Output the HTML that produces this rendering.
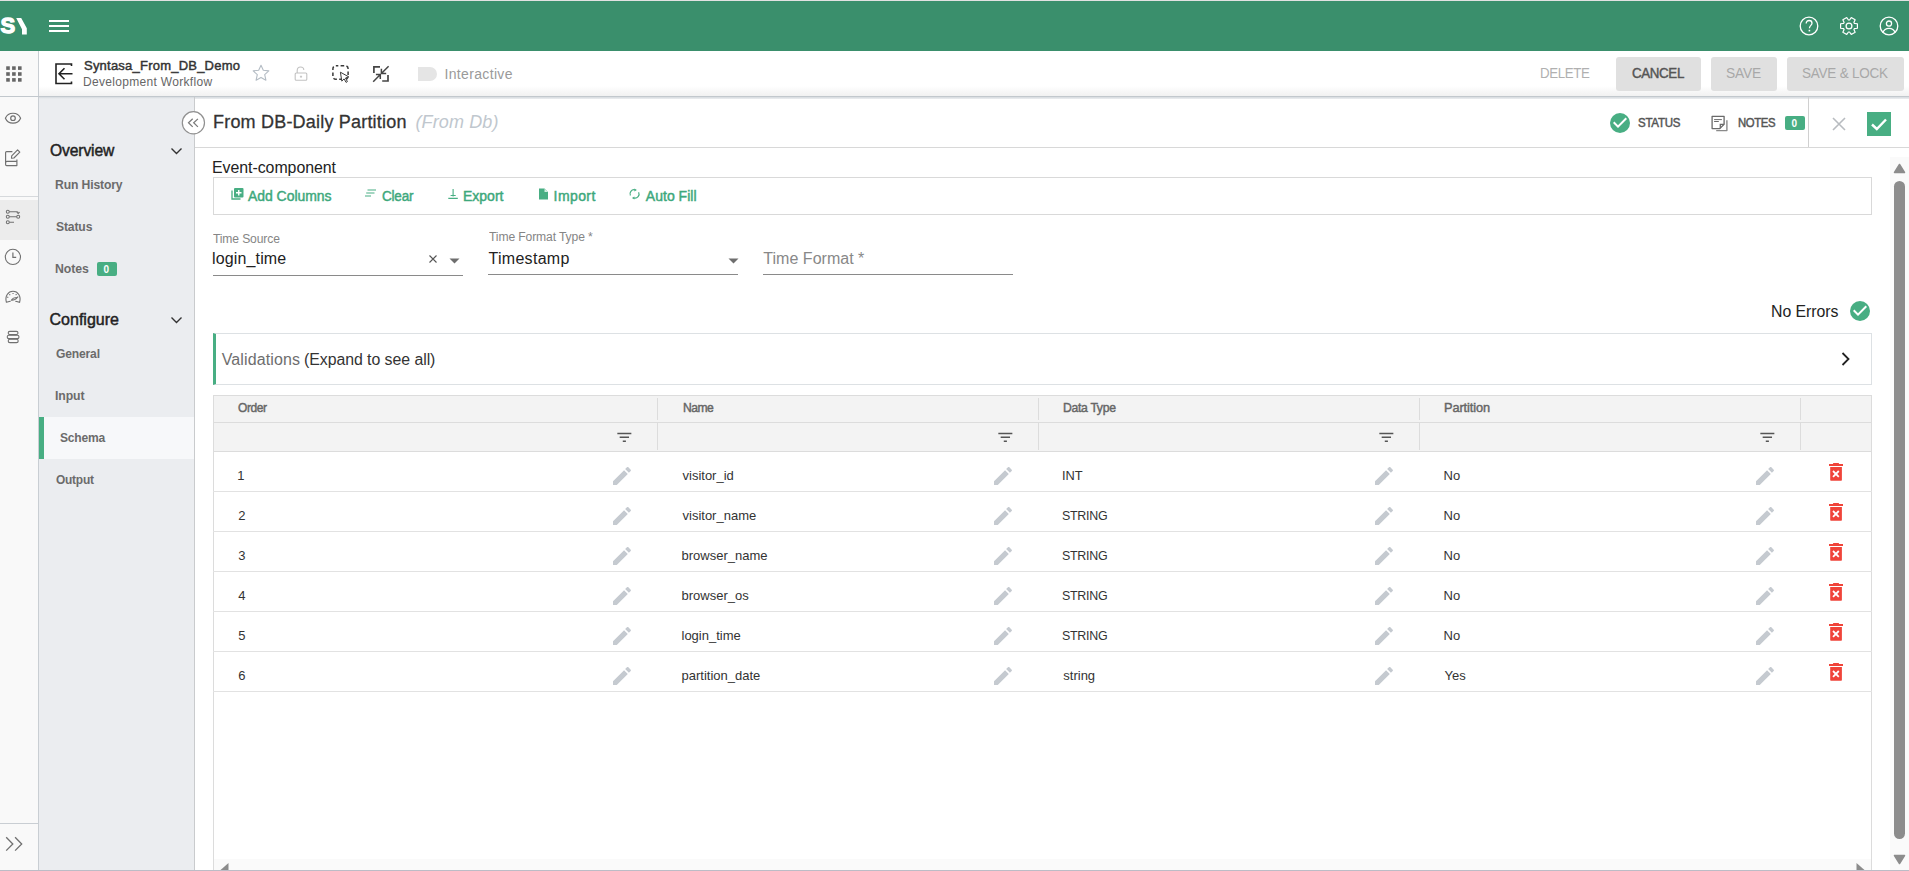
<!DOCTYPE html>
<html><head><meta charset="utf-8">
<style>
*{margin:0;padding:0;box-sizing:border-box}
html,body{width:1909px;height:871px;overflow:hidden;background:#fff;font-family:"Liberation Sans",sans-serif;color:#333}
.a{position:absolute}
.t{position:absolute;white-space:nowrap;line-height:1}
svg{position:absolute;overflow:visible}
</style></head>
<body>
<div class="a" style="left:0px;top:0px;width:1909px;height:1px;background:#e2e2e2;"></div>
<div class="a" style="left:0px;top:1px;width:1909px;height:50px;background:#3a8f6c;"></div>
<div class="t" style="left:0.40px;top:15.30px;font-size:22px;font-weight:700;color:#fff;-webkit-text-stroke:1.3px #fff;">S</div>
<svg style="left:0px;top:0px" width="40" height="50" viewBox="0 0 40 50"><path d="M16.2 17.9 L21.2 17.9 L26.8 28.2 L26.8 34.6 L22 34.6 L22 29.2 Z" fill="#fff"/></svg>
<div class="a" style="left:49px;top:20px;width:20px;height:2px;background:#fff;"></div>
<div class="a" style="left:49px;top:25px;width:20px;height:2px;background:#fff;"></div>
<div class="a" style="left:49px;top:30px;width:20px;height:2px;background:#fff;"></div>
<svg style="left:1799px;top:16px" width="20" height="20" viewBox="0 0 20 20"><circle cx="10" cy="10" r="8.8" fill="none" stroke="#fff" stroke-width="1.3"/><path d="M7.2 7.6 C7.2 5.6 8.6 4.5 10.1 4.5 C11.8 4.5 13 5.6 13 7.2 C13 9.3 10.4 9.5 10.4 12.3" fill="none" stroke="#fff" stroke-width="1.3"/><rect x="9.6" y="13.8" width="1.6" height="1.6" fill="#fff"/></svg>
<svg style="left:1839px;top:15.8px" width="20" height="20" viewBox="0 0 20 20"><path d="M15.44 7.46 L18.40 7.75 L18.40 12.25 L15.44 12.54 L14.91 13.44 L16.15 16.15 L12.25 18.40 L10.52 15.98 L9.48 15.98 L7.75 18.40 L3.85 16.15 L5.09 13.44 L4.56 12.54 L1.60 12.25 L1.60 7.75 L4.56 7.46 L5.09 6.56 L3.85 3.85 L7.75 1.60 L9.48 4.02 L10.52 4.02 L12.25 1.60 L16.15 3.85 L14.91 6.56 Z" fill="none" stroke="#fff" stroke-width="1.2" stroke-linejoin="round"/><circle cx="10" cy="10" r="2.9" fill="none" stroke="#fff" stroke-width="1.3"/></svg>
<svg style="left:1879px;top:16px" width="20" height="20" viewBox="0 0 20 20"><defs><clipPath id="uc"><circle cx="10" cy="10" r="8.6"/></clipPath></defs><circle cx="10" cy="10" r="8.8" fill="none" stroke="#fff" stroke-width="1.3"/><circle cx="10" cy="7.6" r="2.6" fill="none" stroke="#fff" stroke-width="1.3"/><path d="M3.8 16.6 C5 13.2 7.3 12.3 10 12.3 C12.7 12.3 15 13.2 16.2 16.6" fill="none" stroke="#fff" stroke-width="1.3"/></svg>
<div class="a" style="left:0px;top:51px;width:38px;height:820px;background:#f9f9f9;"></div>
<div class="a" style="left:38px;top:51px;width:1px;height:820px;background:#c9ced3;"></div>
<div class="a" style="left:39px;top:51px;width:1870px;height:45px;background:linear-gradient(#fff 0,#fff 35px,#f1f1f1 45px);"></div>
<div class="a" style="left:0px;top:96px;width:1909px;height:1px;background:#c2c8cd;"></div>
<div class="a" style="left:39px;top:97px;width:1870px;height:2px;background:linear-gradient(#d5dadf,#eceef0);"></div>
<svg style="left:0px;top:0px" width="38" height="96" viewBox="0 0 38 96"><rect x="6.20" y="66.30" width="3.6" height="3.6" fill="#666"/><rect x="6.20" y="72.20" width="3.6" height="3.6" fill="#666"/><rect x="6.20" y="78.10" width="3.6" height="3.6" fill="#666"/><rect x="12.10" y="66.30" width="3.6" height="3.6" fill="#666"/><rect x="12.10" y="72.20" width="3.6" height="3.6" fill="#666"/><rect x="12.10" y="78.10" width="3.6" height="3.6" fill="#666"/><rect x="18.00" y="66.30" width="3.6" height="3.6" fill="#666"/><rect x="18.00" y="72.20" width="3.6" height="3.6" fill="#666"/><rect x="18.00" y="78.10" width="3.6" height="3.6" fill="#666"/></svg>
<svg style="left:55px;top:63px" width="18" height="22" viewBox="0 0 18 22"><path d="M16.5 3 L16.5 1 L1 1 L1 20.5 L16.5 20.5 L16.5 18.5" fill="none" stroke="#222" stroke-width="1.6"/><path d="M17.5 10.7 L4 10.7 M9.5 5.2 L4 10.7 L9.5 16.2" fill="none" stroke="#222" stroke-width="1.6"/></svg>
<div class="t" style="left:84.00px;top:58.55px;font-size:13px;font-weight:400;color:#333;letter-spacing:0.221px;-webkit-text-stroke:0.45px;">Syntasa_From_DB_Demo</div>
<div class="t" style="left:83.00px;top:75.70px;font-size:12px;font-weight:400;color:#666;letter-spacing:0.316px;">Development Workflow</div>
<svg style="left:252px;top:64px" width="18" height="18" viewBox="0 0 18 18"><path d="M9 1.2 L11.3 6.3 L16.8 6.9 L12.7 10.6 L13.9 16.2 L9 13.4 L4.1 16.2 L5.3 10.6 L1.2 6.9 L6.7 6.3 Z" fill="none" stroke="#b4bcc4" stroke-width="1.1" stroke-linejoin="round"/></svg>
<svg style="left:294px;top:66px" width="14" height="15" viewBox="0 0 14 15"><path d="M3.2 7 L3.2 4.6 C3.2 2.4 4.6 1 6.5 1 C8.4 1 9.8 2.4 9.8 4" fill="none" stroke="#c2c2c2" stroke-width="1.1"/><rect x="1.2" y="7" width="11.6" height="7.3" rx="1" fill="none" stroke="#c2c2c2" stroke-width="1.1"/><path d="M7 9.6 L7 11.8 M5.9 10.7 L8.1 10.7" stroke="#c2c2c2" stroke-width="1"/></svg>
<svg style="left:331px;top:64px" width="20" height="20" viewBox="0 0 20 20"><rect x="1.9" y="1.7" width="15.2" height="13.6" rx="3" fill="none" stroke="#3a3a3a" stroke-width="1.5" stroke-dasharray="3.6 2.3" stroke-dashoffset="1.2"/><path d="M9.4 8.2 L17.8 12.9 L14.5 14 L16.4 17.6 L15.1 18.4 L13.1 14.9 L10.8 17.1 Z" fill="#fff" stroke="#3a3a3a" stroke-width="1"/></svg>
<svg style="left:372px;top:65px" width="18" height="18" viewBox="0 0 18 18"><path d="M1.9 7.9 L1.9 1.8 L8 1.8 M10.2 16 L16 16 L16 10.1" fill="none" stroke="#454545" stroke-width="1.7"/><path d="M16.6 1.3 L9.6 8.2 M9.4 3.7 L9.4 8.4 L14.2 8.4 M1.2 16.7 L8.1 9.7 M3.9 9.5 L8.3 9.5 L8.3 14.1" fill="none" stroke="#454545" stroke-width="1.5"/></svg>
<div class="a" style="left:418px;top:67px;width:19px;height:14px;background:#e5e5e5;border-radius:0 7px 7px 0"></div>
<div class="t" style="left:444.50px;top:66.60px;font-size:14px;font-weight:400;color:#9a9a9a;letter-spacing:0.340px;">Interactive</div>
<div class="t" style="left:1540.05px;top:66.10px;font-size:14px;font-weight:400;color:#b0b0b0;letter-spacing:-0.370px;transform:scaleX(0.9502);transform-origin:0 0;">DELETE</div>
<div class="a" style="left:1616px;top:57px;width:85px;height:34px;background:#e0e0e0;border-radius:3px"></div>
<div class="t" style="left:1632.00px;top:66.10px;font-size:14px;font-weight:400;color:#555;letter-spacing:-0.378px;transform:scaleX(0.9526);transform-origin:0 0;-webkit-text-stroke:0.45px;">CANCEL</div>
<div class="a" style="left:1711px;top:57px;width:66px;height:34px;background:#e0e0e0;border-radius:3px"></div>
<div class="t" style="left:1726.02px;top:66.10px;font-size:14px;font-weight:400;color:#a8a8a8;letter-spacing:-0.136px;transform:scaleX(0.9829);transform-origin:0 0;">SAVE</div>
<div class="a" style="left:1787px;top:57px;width:117px;height:34px;background:#e0e0e0;border-radius:3px"></div>
<div class="t" style="left:1802.04px;top:66.10px;font-size:14px;font-weight:400;color:#a8a8a8;letter-spacing:-0.224px;transform:scaleX(0.9640);transform-origin:0 0;">SAVE &amp; LOCK</div>
<div class="a" style="left:39px;top:99px;width:155px;height:772px;background:#ebedf0;"></div>
<div class="a" style="left:194px;top:97px;width:1px;height:774px;background:#c9cbcd;"></div>
<div class="a" style="left:0px;top:196px;width:38px;height:1px;background:#d6d9dc;"></div>
<div class="a" style="left:0px;top:200px;width:38px;height:40px;background:#ececec;"></div>
<div class="a" style="left:0px;top:823px;width:38px;height:1px;background:#c9ced3;"></div>
<svg style="left:0px;top:108px" width="38" height="24" viewBox="0 0 38 24"><path d="M5.4 10.2 C8.2 3.6 17.8 3.6 20.6 10.2 C17.8 16.8 8.2 16.8 5.4 10.2 Z" fill="none" stroke="#707070" stroke-width="1.15" stroke-linejoin="round"/><circle cx="13" cy="10.2" r="2.3" fill="none" stroke="#707070" stroke-width="1.2"/></svg>
<svg style="left:0px;top:140px" width="38" height="30" viewBox="0 0 38 30"><g fill="none" stroke="#707070" stroke-width="1.15" stroke-linejoin="round"><path d="M12.4 11.6 L6.6 11.6 C6 11.6 5.6 12 5.6 12.6 L5.6 24.6 C5.6 25.2 6 25.6 6.6 25.6 L16.9 25.6 L16.9 19.4"/><path d="M5.7 22.4 C5.7 21.7 6.1 21.3 6.8 21.3 L16.9 21.3"/><path d="M11.5 18.2 L11.7 15.8 L17.6 9.9 L19.8 12.1 L13.9 18 Z"/></g></svg>
<svg style="left:0px;top:200px" width="38" height="40" viewBox="0 0 38 40"><g fill="none" stroke="#707070" stroke-width="1.05"><circle cx="7.8" cy="11.7" r="1.5"/><circle cx="7.8" cy="16.8" r="1.5"/><circle cx="18.2" cy="16.8" r="1.5"/><circle cx="7.8" cy="22.3" r="1.5"/><path d="M9.3 11.7 L17 11.7 C17.8 11.7 18.2 12.2 18.2 13"/><path d="M9.3 16.8 L16.7 16.8 M9.3 22.3 L14 22.3"/><path d="M16.8 12.2 L18.2 13.6 L19.6 12.2"/></g></svg>
<svg style="left:0px;top:240px" width="38" height="40" viewBox="0 0 38 40"><circle cx="12.9" cy="16.9" r="7.6" fill="none" stroke="#707070" stroke-width="1.1"/><path d="M12.9 12.6 L12.9 17.3 L16.2 17.3" fill="none" stroke="#707070" stroke-width="1.2"/></svg>
<svg style="left:0px;top:280px" width="38" height="40" viewBox="0 0 38 40"><g fill="none" stroke="#707070" stroke-width="1.1" stroke-linecap="round"><path d="M6.4 22.3 C4.6 16 8.2 11.3 13 11.3 C17.8 11.3 21.4 16 19.6 22.3 L15.7 21.3 M6.4 22.3 L10.2 21.3"/><path d="M9.6 14.6 L9.9 14.8 M12.9 13.5 L13.2 13.5 M16 14.7 L16.3 14.5 M7.7 17.1 L7.9 17.4 M17.7 17 L17.9 16.8"/><path d="M11.5 20.1 C12.4 18.4 15.3 17.5 17.2 17.5 C16.4 19.1 13.6 20.3 11.5 20.1 Z"/></g></svg>
<svg style="left:0px;top:320px" width="38" height="40" viewBox="0 0 38 40"><g fill="none" stroke="#707070" stroke-width="1.1"><rect x="8.2" y="11.4" width="9.8" height="3.2" rx="1.6"/><rect x="7.2" y="15.2" width="11.8" height="3.4" rx="1.7"/><rect x="8.2" y="19.2" width="10" height="3.4" rx="1.7"/></g></svg>
<svg style="left:3px;top:834px" width="20" height="20" viewBox="0 0 20 20"><path d="M3.2 3.3 L9.8 10 L3.2 16.6 M12.1 3.3 L18.7 10 L12.1 16.6" fill="none" stroke="#707070" stroke-width="1.3"/></svg>
<svg style="left:176px;top:105px" width="36" height="36" viewBox="0 0 36 36"><circle cx="17.4" cy="17.8" r="11.1" fill="#fff" stroke="#909090" stroke-width="1.2"/><path d="M16.7 13.7 L12.5 17.8 L16.7 21.9 M21.9 13.9 L17.7 17.8 L21.9 21.9" fill="none" stroke="#7a7a7a" stroke-width="1.25"/></svg>
<div class="t" style="left:49.50px;top:142.90px;font-size:16px;font-weight:400;color:#222;letter-spacing:-0.140px;transform:scaleX(0.9785);transform-origin:0 0;-webkit-text-stroke:0.45px;">Overview</div>
<svg style="left:170px;top:145px" width="13" height="13" viewBox="0 0 13 13"><path d="M1.5 3.5 L6.5 8.5 L11.5 3.5" fill="none" stroke="#333" stroke-width="1.4"/></svg>
<div class="t" style="left:54.53px;top:179.18px;font-size:12.5px;font-weight:700;color:#6b6b6b;letter-spacing:-0.132px;transform:scaleX(0.9726);transform-origin:0 0;">Run History</div>
<div class="t" style="left:55.50px;top:220.88px;font-size:12.5px;font-weight:700;color:#6b6b6b;letter-spacing:-0.148px;transform:scaleX(0.9716);transform-origin:0 0;">Status</div>
<div class="t" style="left:54.52px;top:263.18px;font-size:12.5px;font-weight:700;color:#6b6b6b;letter-spacing:-0.102px;transform:scaleX(0.9824);transform-origin:0 0;">Notes</div>
<div class="a" style="left:97px;top:262px;width:20px;height:14px;background:#48ae83;border-radius:2px"></div>
<div class="t" style="left:103.50px;top:264.50px;font-size:10px;font-weight:700;color:#fff;">0</div>
<div class="t" style="left:49.50px;top:312.30px;font-size:16px;font-weight:400;color:#222;letter-spacing:0.012px;-webkit-text-stroke:0.45px;">Configure</div>
<svg style="left:170px;top:314px" width="13" height="13" viewBox="0 0 13 13"><path d="M1.5 3.5 L6.5 8.5 L11.5 3.5" fill="none" stroke="#333" stroke-width="1.4"/></svg>
<div class="t" style="left:55.50px;top:348.07px;font-size:12.5px;font-weight:700;color:#6b6b6b;letter-spacing:-0.172px;transform:scaleX(0.9674);transform-origin:0 0;">General</div>
<div class="t" style="left:54.52px;top:389.57px;font-size:12.5px;font-weight:700;color:#6b6b6b;letter-spacing:-0.102px;transform:scaleX(0.9800);transform-origin:0 0;">Input</div>
<div class="a" style="left:39px;top:417px;width:155px;height:42px;background:#f7f8fa;"></div>
<div class="a" style="left:39px;top:417px;width:5px;height:42px;background:#48ae83;"></div>
<div class="t" style="left:60.20px;top:432.48px;font-size:12.5px;font-weight:700;color:#6b6b6b;letter-spacing:-0.232px;transform:scaleX(0.9650);transform-origin:0 0;">Schema</div>
<div class="t" style="left:55.50px;top:474.18px;font-size:12.5px;font-weight:700;color:#6b6b6b;letter-spacing:-0.251px;transform:scaleX(0.9561);transform-origin:0 0;">Output</div>
<div class="a" style="left:195px;top:147px;width:1714px;height:1px;background:#d8d8d8;"></div>
<div class="t" style="left:213.00px;top:112.70px;font-size:18px;font-weight:400;color:#333;letter-spacing:0.200px;-webkit-text-stroke:0.3px;">From DB-Daily Partition</div>
<div class="t" style="left:415.40px;top:112.70px;font-size:18px;font-weight:400;color:#c0c7ce;letter-spacing:0.137px;font-style:italic">(From Db)</div>
<svg style="left:1610px;top:112.8px" width="20" height="20" viewBox="2 2 20 20"><circle cx="12" cy="12" r="10" fill="#48ae83"/><path d="M10 17l-5-5 1.41-1.41L10 14.17l7.59-7.59L19 8l-9 9z" fill="#fff"/></svg>
<div class="t" style="left:1638.40px;top:116.70px;font-size:12px;font-weight:400;color:#555;letter-spacing:-0.258px;transform:scaleX(0.9596);transform-origin:0 0;-webkit-text-stroke:0.45px;">STATUS</div>
<svg style="left:1700px;top:108px" width="30" height="30" viewBox="0 0 30 30"><path d="M12.1 8.3 L24.1 8.3 L24.1 16.3 L19.8 20.6 L12.1 20.6 Z" fill="none" stroke="#6a6a6a" stroke-width="1.3" stroke-linejoin="round"/><path d="M24.1 16.3 L20.3 16.3 L20.3 20.3" fill="none" stroke="#6a6a6a" stroke-width="1.3"/><path d="M14.1 11.6 L21.9 11.6 M14.1 13.5 L18.8 13.5" stroke="#6a6a6a" stroke-width="1"/><path d="M26.9 12.3 L26.9 22.6 L16.2 22.6" fill="none" stroke="#8a8a8a" stroke-width="1.4" stroke-linejoin="round"/></svg>
<div class="t" style="left:1737.60px;top:116.70px;font-size:12px;font-weight:400;color:#555;letter-spacing:-0.402px;transform:scaleX(0.9444);transform-origin:0 0;-webkit-text-stroke:0.45px;">NOTES</div>
<div class="a" style="left:1785px;top:116px;width:20px;height:14px;background:#48ae83;border-radius:2px"></div>
<div class="t" style="left:1791.50px;top:118.50px;font-size:10px;font-weight:700;color:#fff;">0</div>
<div class="a" style="left:1808px;top:97px;width:1px;height:50px;background:#d0d0d0;"></div>
<svg style="left:1832px;top:117px" width="14" height="14" viewBox="0 0 14 14"><path d="M1 1 L13 13 M13 1 L1 13" stroke="#b8bcc0" stroke-width="1.6"/></svg>
<div class="a" style="left:1867px;top:112px;width:24px;height:24px;background:#48ae83;"></div>
<svg style="left:1867px;top:112px" width="24" height="24" viewBox="0 0 24 24"><path d="M5 12.5 L9.8 17 L19 7.5" fill="none" stroke="#fff" stroke-width="2.4"/></svg>
<div class="a" style="left:1890px;top:157px;width:19px;height:714px;background:#fafafa;"></div>
<svg style="left:1893px;top:163px" width="13" height="11" viewBox="0 0 13 11"><path d="M6.5 1.5 L11.5 9.5 L1.5 9.5 Z" fill="#8c8c8c" stroke="#8c8c8c" stroke-width="1.5" stroke-linejoin="round"/></svg>
<div class="a" style="left:1894px;top:181px;width:11px;height:658px;background:#8c8c8c;border-radius:5.5px"></div>
<svg style="left:1893px;top:854px" width="13" height="11" viewBox="0 0 13 11"><path d="M1.5 1.5 L11.5 1.5 L6.5 9.5 Z" fill="#8c8c8c" stroke="#8c8c8c" stroke-width="1.5" stroke-linejoin="round"/></svg>
<div class="t" style="left:212.01px;top:160.20px;font-size:16px;font-weight:400;color:#222;letter-spacing:-0.040px;transform:scaleX(0.9933);transform-origin:0 0;">Event-component</div>
<div class="a" style="left:213px;top:177px;width:1659px;height:38px;background:#fff;border:1px solid #d9d9d9"></div>
<svg style="left:230.7px;top:187px" width="13" height="13" viewBox="0 0 13 13"><path d="M1 3.5 L1 12 L9.5 12" fill="none" stroke="#48ae83" stroke-width="1.3"/><rect x="3" y="1" width="9.5" height="9.5" rx="1" fill="#48ae83"/><path d="M7.75 3 L7.75 8.5 M5 5.75 L10.5 5.75" stroke="#fff" stroke-width="1.4"/></svg>
<div class="t" style="left:247.80px;top:188.80px;font-size:14px;font-weight:400;color:#3da87c;letter-spacing:-0.020px;transform:scaleX(0.9964);transform-origin:0 0;-webkit-text-stroke:0.45px;">Add Columns</div>
<svg style="left:364px;top:189px" width="13" height="9" viewBox="0 0 13 9"><path d="M3.5 1 L12 1 M2.2 4 L10.5 4 M1 7 L7 7" stroke="#48ae83" stroke-width="1.1"/></svg>
<div class="t" style="left:381.60px;top:188.80px;font-size:14px;font-weight:400;color:#3da87c;letter-spacing:-0.207px;transform:scaleX(0.9647);transform-origin:0 0;-webkit-text-stroke:0.45px;">Clear</div>
<svg style="left:447px;top:188px" width="12" height="12" viewBox="0 0 12 12"><path d="M6.1 1 L6.1 8.6 M3.6 7.5 L8.7 7.5 M1.3 10.4 L10.8 10.4" fill="none" stroke="#48ae83" stroke-width="1.1"/></svg>
<div class="t" style="left:463.00px;top:188.80px;font-size:14px;font-weight:400;color:#3da87c;letter-spacing:0.000px;-webkit-text-stroke:0.45px;">Export</div>
<svg style="left:538px;top:188px" width="11" height="12" viewBox="0 0 11 12"><path d="M1 0.5 L6.5 0.5 L10 4 L10 11.5 L1 11.5 Z" fill="#48ae83"/><path d="M6.5 0.5 L6.5 4 L10 4" fill="#d0eee0"/></svg>
<div class="t" style="left:553.60px;top:188.80px;font-size:14px;font-weight:400;color:#3da87c;letter-spacing:0.400px;-webkit-text-stroke:0.45px;">Import</div>
<svg style="left:629px;top:188px" width="12" height="12" viewBox="0 0 12 12"><path d="M1.4 7.6 A4.1 4.1 0 0 1 5.9 1.8 M9.6 4.2 A4.1 4.1 0 0 1 4.9 10" fill="none" stroke="#48ae83" stroke-width="1.2"/><path d="M5.4 0.4 L7.9 2 L5.4 3.5 Z M5.4 8.5 L2.9 9.9 L5.4 11.4 Z" fill="#48ae83"/></svg>
<div class="t" style="left:645.80px;top:188.80px;font-size:14px;font-weight:400;color:#3da87c;letter-spacing:0.025px;-webkit-text-stroke:0.45px;">Auto Fill</div>
<div class="t" style="left:213.00px;top:233.18px;font-size:12.5px;font-weight:400;color:#858585;letter-spacing:-0.144px;transform:scaleX(0.9700);transform-origin:0 0;">Time Source</div>
<div class="t" style="left:212.00px;top:250.90px;font-size:16px;font-weight:400;color:#222;letter-spacing:0.144px;">login_time</div>
<svg style="left:426.8px;top:253px" width="12" height="12" viewBox="0 0 12 12"><path d="M2.5 2.5 L9.5 9.5 M9.5 2.5 L2.5 9.5" stroke="#555" stroke-width="1.1"/></svg>
<svg style="left:447.5px;top:256.9px" width="13" height="8" viewBox="0 0 13 8"><path d="M1.5 1.5 L11.5 1.5 L6.5 6.5 Z" fill="#6e6e6e"/></svg>
<div class="a" style="left:213px;top:275px;width:250px;height:1px;background:#8a8a8a;"></div>
<div class="t" style="left:488.50px;top:230.88px;font-size:12.5px;font-weight:400;color:#858585;letter-spacing:-0.128px;transform:scaleX(0.9708);transform-origin:0 0;">Time Format Type *</div>
<div class="t" style="left:488.50px;top:251.40px;font-size:16px;font-weight:400;color:#222;letter-spacing:0.287px;">Timestamp</div>
<svg style="left:726.6px;top:256.9px" width="13" height="8" viewBox="0 0 13 8"><path d="M1.5 1.5 L11.5 1.5 L6.5 6.5 Z" fill="#6e6e6e"/></svg>
<div class="a" style="left:488px;top:274px;width:250px;height:1px;background:#8a8a8a;"></div>
<div class="t" style="left:763.30px;top:251.30px;font-size:16px;font-weight:400;color:#888;letter-spacing:0.025px;">Time Format *</div>
<div class="a" style="left:763px;top:274px;width:250px;height:1px;background:#8a8a8a;"></div>
<div class="t" style="left:1770.51px;top:304.40px;font-size:16px;font-weight:400;color:#222;letter-spacing:-0.056px;transform:scaleX(0.9901);transform-origin:0 0;">No Errors</div>
<svg style="left:1850px;top:301px" width="20" height="20" viewBox="2 2 20 20"><circle cx="12" cy="12" r="10" fill="#48ae83"/><path d="M10 17l-5-5 1.41-1.41L10 14.17l7.59-7.59L19 8l-9 9z" fill="#fff"/></svg>
<div class="a" style="left:213px;top:333px;width:1659px;height:52px;background:#fff;border:1px solid #dde1e4;border-left:3px solid #48ae83"></div>
<div class="t" style="left:221.70px;top:352.00px;font-size:16px;font-weight:400;color:#6e6e6e;letter-spacing:0.130px;">Validations</div>
<div class="t" style="left:303.81px;top:352.00px;font-size:16px;font-weight:400;color:#333;letter-spacing:-0.045px;transform:scaleX(0.9909);transform-origin:0 0;">(Expand to see all)</div>
<svg style="left:1840px;top:351px" width="12" height="16" viewBox="0 0 12 16"><path d="M2.5 2 L8.5 8 L2.5 14" fill="none" stroke="#222" stroke-width="1.8"/></svg>
<div class="a" style="left:213px;top:395px;width:1659px;height:57px;background:#f3f3f3;"></div>
<div class="a" style="left:213px;top:395px;width:1659px;height:1px;background:#dcdcdc;"></div>
<div class="a" style="left:213px;top:422px;width:1659px;height:1px;background:#dcdcdc;"></div>
<div class="a" style="left:213px;top:451px;width:1659px;height:1px;background:#dcdcdc;"></div>
<div class="a" style="left:213px;top:395px;width:1px;height:476px;background:#dcdcdc;"></div>
<div class="a" style="left:1871px;top:395px;width:1px;height:476px;background:#dcdcdc;"></div>
<div class="a" style="left:657px;top:398px;width:1px;height:22px;background:#dcdcdc;"></div>
<div class="a" style="left:657px;top:423px;width:1px;height:27px;background:#dcdcdc;"></div>
<div class="a" style="left:1038px;top:398px;width:1px;height:22px;background:#dcdcdc;"></div>
<div class="a" style="left:1038px;top:423px;width:1px;height:27px;background:#dcdcdc;"></div>
<div class="a" style="left:1419px;top:398px;width:1px;height:22px;background:#dcdcdc;"></div>
<div class="a" style="left:1419px;top:423px;width:1px;height:27px;background:#dcdcdc;"></div>
<div class="a" style="left:1800px;top:398px;width:1px;height:22px;background:#dcdcdc;"></div>
<div class="a" style="left:1800px;top:423px;width:1px;height:27px;background:#dcdcdc;"></div>
<div class="t" style="left:238.20px;top:401.25px;font-size:13px;font-weight:400;color:#666;letter-spacing:-0.465px;transform:scaleX(0.9241);transform-origin:0 0;-webkit-text-stroke:0.45px;">Order</div>
<div class="t" style="left:682.50px;top:401.25px;font-size:13px;font-weight:400;color:#666;letter-spacing:-0.573px;transform:scaleX(0.9314);transform-origin:0 0;-webkit-text-stroke:0.45px;">Name</div>
<div class="t" style="left:1063.30px;top:401.25px;font-size:13px;font-weight:400;color:#666;letter-spacing:-0.325px;transform:scaleX(0.9380);transform-origin:0 0;-webkit-text-stroke:0.45px;">Data Type</div>
<div class="t" style="left:1444.00px;top:401.25px;font-size:13px;font-weight:400;color:#666;letter-spacing:-0.082px;transform:scaleX(0.9800);transform-origin:0 0;-webkit-text-stroke:0.45px;">Partition</div>
<svg style="left:614.7px;top:427.9px" width="18.7" height="18.7" viewBox="0 0 24 24"><path d="M10 18h4v-2h-4v2zM3 6v2h18V6H3zm3 7h12v-2H6v2z" fill="#555"/></svg>
<svg style="left:995.95px;top:427.9px" width="18.7" height="18.7" viewBox="0 0 24 24"><path d="M10 18h4v-2h-4v2zM3 6v2h18V6H3zm3 7h12v-2H6v2z" fill="#555"/></svg>
<svg style="left:1377.05px;top:427.9px" width="18.7" height="18.7" viewBox="0 0 24 24"><path d="M10 18h4v-2h-4v2zM3 6v2h18V6H3zm3 7h12v-2H6v2z" fill="#555"/></svg>
<svg style="left:1758.05px;top:427.9px" width="18.7" height="18.7" viewBox="0 0 24 24"><path d="M10 18h4v-2h-4v2zM3 6v2h18V6H3zm3 7h12v-2H6v2z" fill="#555"/></svg>
<div class="a" style="left:213px;top:491px;width:1659px;height:1px;background:#e2e2e2;"></div>
<div class="t" style="left:237.20px;top:469.25px;font-size:13px;font-weight:400;color:#333;">1</div>
<div class="t" style="left:682.50px;top:469.25px;font-size:13px;font-weight:400;color:#333;">visitor_id</div>
<div class="t" style="left:1062.31px;top:469.25px;font-size:13px;font-weight:400;color:#333;letter-spacing:-0.081px;transform:scaleX(0.9880);transform-origin:0 0;">INT</div>
<div class="t" style="left:1443.60px;top:469.25px;font-size:13px;font-weight:400;color:#333;">No</div>
<svg style="left:610px;top:464px" width="24" height="24" viewBox="0 0 24 24"><path d="M3 17.25V21h3.75L17.81 9.94l-3.75-3.75L3 17.25zM20.71 7.04c.39-.39.39-1.02 0-1.41l-2.34-2.34c-.39-.39-1.02-.39-1.41 0l-1.83 1.83 3.75 3.75 1.83-1.83z" fill="#c5cad0"/></svg>
<svg style="left:991px;top:464px" width="24" height="24" viewBox="0 0 24 24"><path d="M3 17.25V21h3.75L17.81 9.94l-3.75-3.75L3 17.25zM20.71 7.04c.39-.39.39-1.02 0-1.41l-2.34-2.34c-.39-.39-1.02-.39-1.41 0l-1.83 1.83 3.75 3.75 1.83-1.83z" fill="#c5cad0"/></svg>
<svg style="left:1372px;top:464px" width="24" height="24" viewBox="0 0 24 24"><path d="M3 17.25V21h3.75L17.81 9.94l-3.75-3.75L3 17.25zM20.71 7.04c.39-.39.39-1.02 0-1.41l-2.34-2.34c-.39-.39-1.02-.39-1.41 0l-1.83 1.83 3.75 3.75 1.83-1.83z" fill="#c5cad0"/></svg>
<svg style="left:1753px;top:464px" width="24" height="24" viewBox="0 0 24 24"><path d="M3 17.25V21h3.75L17.81 9.94l-3.75-3.75L3 17.25zM20.71 7.04c.39-.39.39-1.02 0-1.41l-2.34-2.34c-.39-.39-1.02-.39-1.41 0l-1.83 1.83 3.75 3.75 1.83-1.83z" fill="#c5cad0"/></svg>
<svg style="left:1829px;top:463px" width="14" height="18" viewBox="0 0 14 18"><rect x="0" y="1" width="14" height="2" fill="#f0443a"/><rect x="4" y="0" width="6" height="1.5" rx="0.6" fill="#f0443a"/><path d="M1.2 4 L12.9 4 L12.9 16.7 C12.9 17.3 12.5 17.7 11.9 17.7 L2.2 17.7 C1.6 17.7 1.2 17.3 1.2 16.7 Z" fill="#f0443a"/><path d="M4 8 L9.8 13.8 M9.8 8 L4 13.8" stroke="#fff" stroke-width="1.8"/></svg>
<div class="a" style="left:213px;top:531px;width:1659px;height:1px;background:#e2e2e2;"></div>
<div class="t" style="left:238.20px;top:509.25px;font-size:13px;font-weight:400;color:#333;">2</div>
<div class="t" style="left:682.50px;top:509.25px;font-size:13px;font-weight:400;color:#333;">visitor_name</div>
<div class="t" style="left:1062.34px;top:509.25px;font-size:13px;font-weight:400;color:#333;letter-spacing:-0.284px;transform:scaleX(0.9575);transform-origin:0 0;">STRING</div>
<div class="t" style="left:1443.60px;top:509.25px;font-size:13px;font-weight:400;color:#333;">No</div>
<svg style="left:610px;top:504px" width="24" height="24" viewBox="0 0 24 24"><path d="M3 17.25V21h3.75L17.81 9.94l-3.75-3.75L3 17.25zM20.71 7.04c.39-.39.39-1.02 0-1.41l-2.34-2.34c-.39-.39-1.02-.39-1.41 0l-1.83 1.83 3.75 3.75 1.83-1.83z" fill="#c5cad0"/></svg>
<svg style="left:991px;top:504px" width="24" height="24" viewBox="0 0 24 24"><path d="M3 17.25V21h3.75L17.81 9.94l-3.75-3.75L3 17.25zM20.71 7.04c.39-.39.39-1.02 0-1.41l-2.34-2.34c-.39-.39-1.02-.39-1.41 0l-1.83 1.83 3.75 3.75 1.83-1.83z" fill="#c5cad0"/></svg>
<svg style="left:1372px;top:504px" width="24" height="24" viewBox="0 0 24 24"><path d="M3 17.25V21h3.75L17.81 9.94l-3.75-3.75L3 17.25zM20.71 7.04c.39-.39.39-1.02 0-1.41l-2.34-2.34c-.39-.39-1.02-.39-1.41 0l-1.83 1.83 3.75 3.75 1.83-1.83z" fill="#c5cad0"/></svg>
<svg style="left:1753px;top:504px" width="24" height="24" viewBox="0 0 24 24"><path d="M3 17.25V21h3.75L17.81 9.94l-3.75-3.75L3 17.25zM20.71 7.04c.39-.39.39-1.02 0-1.41l-2.34-2.34c-.39-.39-1.02-.39-1.41 0l-1.83 1.83 3.75 3.75 1.83-1.83z" fill="#c5cad0"/></svg>
<svg style="left:1829px;top:503px" width="14" height="18" viewBox="0 0 14 18"><rect x="0" y="1" width="14" height="2" fill="#f0443a"/><rect x="4" y="0" width="6" height="1.5" rx="0.6" fill="#f0443a"/><path d="M1.2 4 L12.9 4 L12.9 16.7 C12.9 17.3 12.5 17.7 11.9 17.7 L2.2 17.7 C1.6 17.7 1.2 17.3 1.2 16.7 Z" fill="#f0443a"/><path d="M4 8 L9.8 13.8 M9.8 8 L4 13.8" stroke="#fff" stroke-width="1.8"/></svg>
<div class="a" style="left:213px;top:571px;width:1659px;height:1px;background:#e2e2e2;"></div>
<div class="t" style="left:238.20px;top:549.25px;font-size:13px;font-weight:400;color:#333;">3</div>
<div class="t" style="left:681.50px;top:549.25px;font-size:13px;font-weight:400;color:#333;">browser_name</div>
<div class="t" style="left:1062.34px;top:549.25px;font-size:13px;font-weight:400;color:#333;letter-spacing:-0.284px;transform:scaleX(0.9575);transform-origin:0 0;">STRING</div>
<div class="t" style="left:1443.60px;top:549.25px;font-size:13px;font-weight:400;color:#333;">No</div>
<svg style="left:610px;top:544px" width="24" height="24" viewBox="0 0 24 24"><path d="M3 17.25V21h3.75L17.81 9.94l-3.75-3.75L3 17.25zM20.71 7.04c.39-.39.39-1.02 0-1.41l-2.34-2.34c-.39-.39-1.02-.39-1.41 0l-1.83 1.83 3.75 3.75 1.83-1.83z" fill="#c5cad0"/></svg>
<svg style="left:991px;top:544px" width="24" height="24" viewBox="0 0 24 24"><path d="M3 17.25V21h3.75L17.81 9.94l-3.75-3.75L3 17.25zM20.71 7.04c.39-.39.39-1.02 0-1.41l-2.34-2.34c-.39-.39-1.02-.39-1.41 0l-1.83 1.83 3.75 3.75 1.83-1.83z" fill="#c5cad0"/></svg>
<svg style="left:1372px;top:544px" width="24" height="24" viewBox="0 0 24 24"><path d="M3 17.25V21h3.75L17.81 9.94l-3.75-3.75L3 17.25zM20.71 7.04c.39-.39.39-1.02 0-1.41l-2.34-2.34c-.39-.39-1.02-.39-1.41 0l-1.83 1.83 3.75 3.75 1.83-1.83z" fill="#c5cad0"/></svg>
<svg style="left:1753px;top:544px" width="24" height="24" viewBox="0 0 24 24"><path d="M3 17.25V21h3.75L17.81 9.94l-3.75-3.75L3 17.25zM20.71 7.04c.39-.39.39-1.02 0-1.41l-2.34-2.34c-.39-.39-1.02-.39-1.41 0l-1.83 1.83 3.75 3.75 1.83-1.83z" fill="#c5cad0"/></svg>
<svg style="left:1829px;top:543px" width="14" height="18" viewBox="0 0 14 18"><rect x="0" y="1" width="14" height="2" fill="#f0443a"/><rect x="4" y="0" width="6" height="1.5" rx="0.6" fill="#f0443a"/><path d="M1.2 4 L12.9 4 L12.9 16.7 C12.9 17.3 12.5 17.7 11.9 17.7 L2.2 17.7 C1.6 17.7 1.2 17.3 1.2 16.7 Z" fill="#f0443a"/><path d="M4 8 L9.8 13.8 M9.8 8 L4 13.8" stroke="#fff" stroke-width="1.8"/></svg>
<div class="a" style="left:213px;top:611px;width:1659px;height:1px;background:#e2e2e2;"></div>
<div class="t" style="left:238.20px;top:589.25px;font-size:13px;font-weight:400;color:#333;">4</div>
<div class="t" style="left:681.50px;top:589.25px;font-size:13px;font-weight:400;color:#333;">browser_os</div>
<div class="t" style="left:1062.34px;top:589.25px;font-size:13px;font-weight:400;color:#333;letter-spacing:-0.284px;transform:scaleX(0.9575);transform-origin:0 0;">STRING</div>
<div class="t" style="left:1443.60px;top:589.25px;font-size:13px;font-weight:400;color:#333;">No</div>
<svg style="left:610px;top:584px" width="24" height="24" viewBox="0 0 24 24"><path d="M3 17.25V21h3.75L17.81 9.94l-3.75-3.75L3 17.25zM20.71 7.04c.39-.39.39-1.02 0-1.41l-2.34-2.34c-.39-.39-1.02-.39-1.41 0l-1.83 1.83 3.75 3.75 1.83-1.83z" fill="#c5cad0"/></svg>
<svg style="left:991px;top:584px" width="24" height="24" viewBox="0 0 24 24"><path d="M3 17.25V21h3.75L17.81 9.94l-3.75-3.75L3 17.25zM20.71 7.04c.39-.39.39-1.02 0-1.41l-2.34-2.34c-.39-.39-1.02-.39-1.41 0l-1.83 1.83 3.75 3.75 1.83-1.83z" fill="#c5cad0"/></svg>
<svg style="left:1372px;top:584px" width="24" height="24" viewBox="0 0 24 24"><path d="M3 17.25V21h3.75L17.81 9.94l-3.75-3.75L3 17.25zM20.71 7.04c.39-.39.39-1.02 0-1.41l-2.34-2.34c-.39-.39-1.02-.39-1.41 0l-1.83 1.83 3.75 3.75 1.83-1.83z" fill="#c5cad0"/></svg>
<svg style="left:1753px;top:584px" width="24" height="24" viewBox="0 0 24 24"><path d="M3 17.25V21h3.75L17.81 9.94l-3.75-3.75L3 17.25zM20.71 7.04c.39-.39.39-1.02 0-1.41l-2.34-2.34c-.39-.39-1.02-.39-1.41 0l-1.83 1.83 3.75 3.75 1.83-1.83z" fill="#c5cad0"/></svg>
<svg style="left:1829px;top:583px" width="14" height="18" viewBox="0 0 14 18"><rect x="0" y="1" width="14" height="2" fill="#f0443a"/><rect x="4" y="0" width="6" height="1.5" rx="0.6" fill="#f0443a"/><path d="M1.2 4 L12.9 4 L12.9 16.7 C12.9 17.3 12.5 17.7 11.9 17.7 L2.2 17.7 C1.6 17.7 1.2 17.3 1.2 16.7 Z" fill="#f0443a"/><path d="M4 8 L9.8 13.8 M9.8 8 L4 13.8" stroke="#fff" stroke-width="1.8"/></svg>
<div class="a" style="left:213px;top:651px;width:1659px;height:1px;background:#e2e2e2;"></div>
<div class="t" style="left:238.20px;top:629.25px;font-size:13px;font-weight:400;color:#333;">5</div>
<div class="t" style="left:681.50px;top:629.25px;font-size:13px;font-weight:400;color:#333;">login_time</div>
<div class="t" style="left:1062.34px;top:629.25px;font-size:13px;font-weight:400;color:#333;letter-spacing:-0.284px;transform:scaleX(0.9575);transform-origin:0 0;">STRING</div>
<div class="t" style="left:1443.60px;top:629.25px;font-size:13px;font-weight:400;color:#333;">No</div>
<svg style="left:610px;top:624px" width="24" height="24" viewBox="0 0 24 24"><path d="M3 17.25V21h3.75L17.81 9.94l-3.75-3.75L3 17.25zM20.71 7.04c.39-.39.39-1.02 0-1.41l-2.34-2.34c-.39-.39-1.02-.39-1.41 0l-1.83 1.83 3.75 3.75 1.83-1.83z" fill="#c5cad0"/></svg>
<svg style="left:991px;top:624px" width="24" height="24" viewBox="0 0 24 24"><path d="M3 17.25V21h3.75L17.81 9.94l-3.75-3.75L3 17.25zM20.71 7.04c.39-.39.39-1.02 0-1.41l-2.34-2.34c-.39-.39-1.02-.39-1.41 0l-1.83 1.83 3.75 3.75 1.83-1.83z" fill="#c5cad0"/></svg>
<svg style="left:1372px;top:624px" width="24" height="24" viewBox="0 0 24 24"><path d="M3 17.25V21h3.75L17.81 9.94l-3.75-3.75L3 17.25zM20.71 7.04c.39-.39.39-1.02 0-1.41l-2.34-2.34c-.39-.39-1.02-.39-1.41 0l-1.83 1.83 3.75 3.75 1.83-1.83z" fill="#c5cad0"/></svg>
<svg style="left:1753px;top:624px" width="24" height="24" viewBox="0 0 24 24"><path d="M3 17.25V21h3.75L17.81 9.94l-3.75-3.75L3 17.25zM20.71 7.04c.39-.39.39-1.02 0-1.41l-2.34-2.34c-.39-.39-1.02-.39-1.41 0l-1.83 1.83 3.75 3.75 1.83-1.83z" fill="#c5cad0"/></svg>
<svg style="left:1829px;top:623px" width="14" height="18" viewBox="0 0 14 18"><rect x="0" y="1" width="14" height="2" fill="#f0443a"/><rect x="4" y="0" width="6" height="1.5" rx="0.6" fill="#f0443a"/><path d="M1.2 4 L12.9 4 L12.9 16.7 C12.9 17.3 12.5 17.7 11.9 17.7 L2.2 17.7 C1.6 17.7 1.2 17.3 1.2 16.7 Z" fill="#f0443a"/><path d="M4 8 L9.8 13.8 M9.8 8 L4 13.8" stroke="#fff" stroke-width="1.8"/></svg>
<div class="a" style="left:213px;top:691px;width:1659px;height:1px;background:#e2e2e2;"></div>
<div class="t" style="left:238.20px;top:669.25px;font-size:13px;font-weight:400;color:#333;">6</div>
<div class="t" style="left:681.50px;top:669.25px;font-size:13px;font-weight:400;color:#333;">partition_date</div>
<div class="t" style="left:1063.30px;top:669.25px;font-size:13px;font-weight:400;color:#333;">string</div>
<div class="t" style="left:1444.60px;top:669.25px;font-size:13px;font-weight:400;color:#333;">Yes</div>
<svg style="left:610px;top:664px" width="24" height="24" viewBox="0 0 24 24"><path d="M3 17.25V21h3.75L17.81 9.94l-3.75-3.75L3 17.25zM20.71 7.04c.39-.39.39-1.02 0-1.41l-2.34-2.34c-.39-.39-1.02-.39-1.41 0l-1.83 1.83 3.75 3.75 1.83-1.83z" fill="#c5cad0"/></svg>
<svg style="left:991px;top:664px" width="24" height="24" viewBox="0 0 24 24"><path d="M3 17.25V21h3.75L17.81 9.94l-3.75-3.75L3 17.25zM20.71 7.04c.39-.39.39-1.02 0-1.41l-2.34-2.34c-.39-.39-1.02-.39-1.41 0l-1.83 1.83 3.75 3.75 1.83-1.83z" fill="#c5cad0"/></svg>
<svg style="left:1372px;top:664px" width="24" height="24" viewBox="0 0 24 24"><path d="M3 17.25V21h3.75L17.81 9.94l-3.75-3.75L3 17.25zM20.71 7.04c.39-.39.39-1.02 0-1.41l-2.34-2.34c-.39-.39-1.02-.39-1.41 0l-1.83 1.83 3.75 3.75 1.83-1.83z" fill="#c5cad0"/></svg>
<svg style="left:1753px;top:664px" width="24" height="24" viewBox="0 0 24 24"><path d="M3 17.25V21h3.75L17.81 9.94l-3.75-3.75L3 17.25zM20.71 7.04c.39-.39.39-1.02 0-1.41l-2.34-2.34c-.39-.39-1.02-.39-1.41 0l-1.83 1.83 3.75 3.75 1.83-1.83z" fill="#c5cad0"/></svg>
<svg style="left:1829px;top:663px" width="14" height="18" viewBox="0 0 14 18"><rect x="0" y="1" width="14" height="2" fill="#f0443a"/><rect x="4" y="0" width="6" height="1.5" rx="0.6" fill="#f0443a"/><path d="M1.2 4 L12.9 4 L12.9 16.7 C12.9 17.3 12.5 17.7 11.9 17.7 L2.2 17.7 C1.6 17.7 1.2 17.3 1.2 16.7 Z" fill="#f0443a"/><path d="M4 8 L9.8 13.8 M9.8 8 L4 13.8" stroke="#fff" stroke-width="1.8"/></svg>
<div class="a" style="left:214px;top:859px;width:1657px;height:12px;background:#fafafa;"></div>
<svg style="left:219px;top:862px" width="11" height="9" viewBox="0 0 11 9"><path d="M9.5 1 L9.5 8 L1.5 8 Z" fill="#8c8c8c"/></svg>
<svg style="left:1855px;top:862px" width="11" height="9" viewBox="0 0 11 9"><path d="M1.5 1 L1.5 8 L9.5 8 Z" fill="#8c8c8c"/></svg>
<div class="a" style="left:0px;top:870px;width:1909px;height:1px;background:#bcbcc6;"></div>
</body></html>
